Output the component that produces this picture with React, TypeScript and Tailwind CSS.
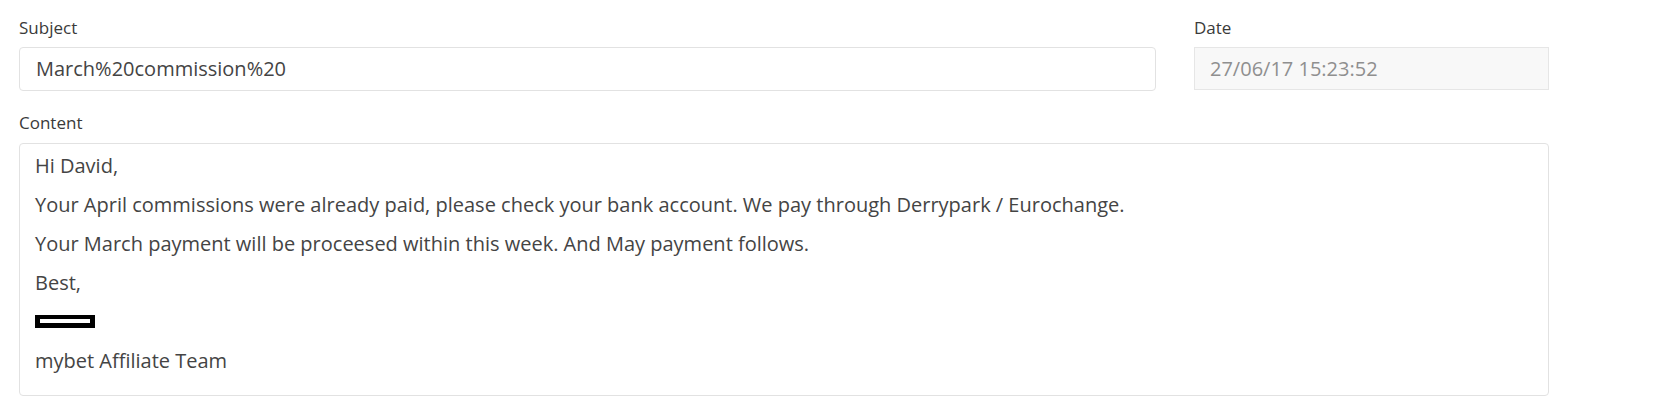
export default function App() {
    const lines = [
        'Hi David,',
        'Your April commissions were already paid, please check your bank account. We pay through Derrypark / Eurochange.',
        'Your March payment will be proceesed within this week. And May payment follows.',
        'Best,',
    ];

    return (
        <div className="min-h-screen bg-white pl-[19px] pt-[15px] text-[#444]" style={{ fontFamily: '"Open Sans", sans-serif' }}>
            <div className="w-[1530px]">
                {/* Subject + Date */}
                <div className="flex gap-[38px]">
                    <div className="flex-1">
                        <label className="block text-[17px] leading-[26px] mb-[6px] text-[#3a3a3a]">Subject</label>
                        <div className="h-[44px] flex items-center px-[16px] border border-[#e2e2e2] rounded-[4px] text-[20px] text-[#444]">
                            March%20commission%20
                        </div>
                    </div>
                    <div className="w-[355px]">
                        <label className="block text-[17px] leading-[26px] mb-[6px] text-[#3a3a3a]">Date</label>
                        <div className="h-[43px] flex items-center px-[15px] border border-[#e6e6e6] bg-[#f8f8f8] text-[20px] text-[#8f8f8f]">
                            27/06/17 15:23:52
                        </div>
                    </div>
                </div>

                {/* Content */}
                <label className="block mt-[19px] text-[17px] leading-[26px] mb-[7px] text-[#3a3a3a]">Content</label>
                <div className="h-[253px] border border-[#e2e2e2] rounded-[4px] px-[15px] pt-[2px] text-[20px]">
                    {lines.map((line) => (
                        <p key={line} className="leading-[39px]">{line}</p>
                    ))}
                    <div className="h-[39px] flex items-center">
                        <div className="w-[60px] h-[13px] border-x-[5px] border-t-[4px] border-b-[5px] border-black bg-white"></div>
                    </div>
                    <p className="leading-[39px]">mybet Affiliate Team</p>
                </div>
            </div>
        </div>
    );
}
